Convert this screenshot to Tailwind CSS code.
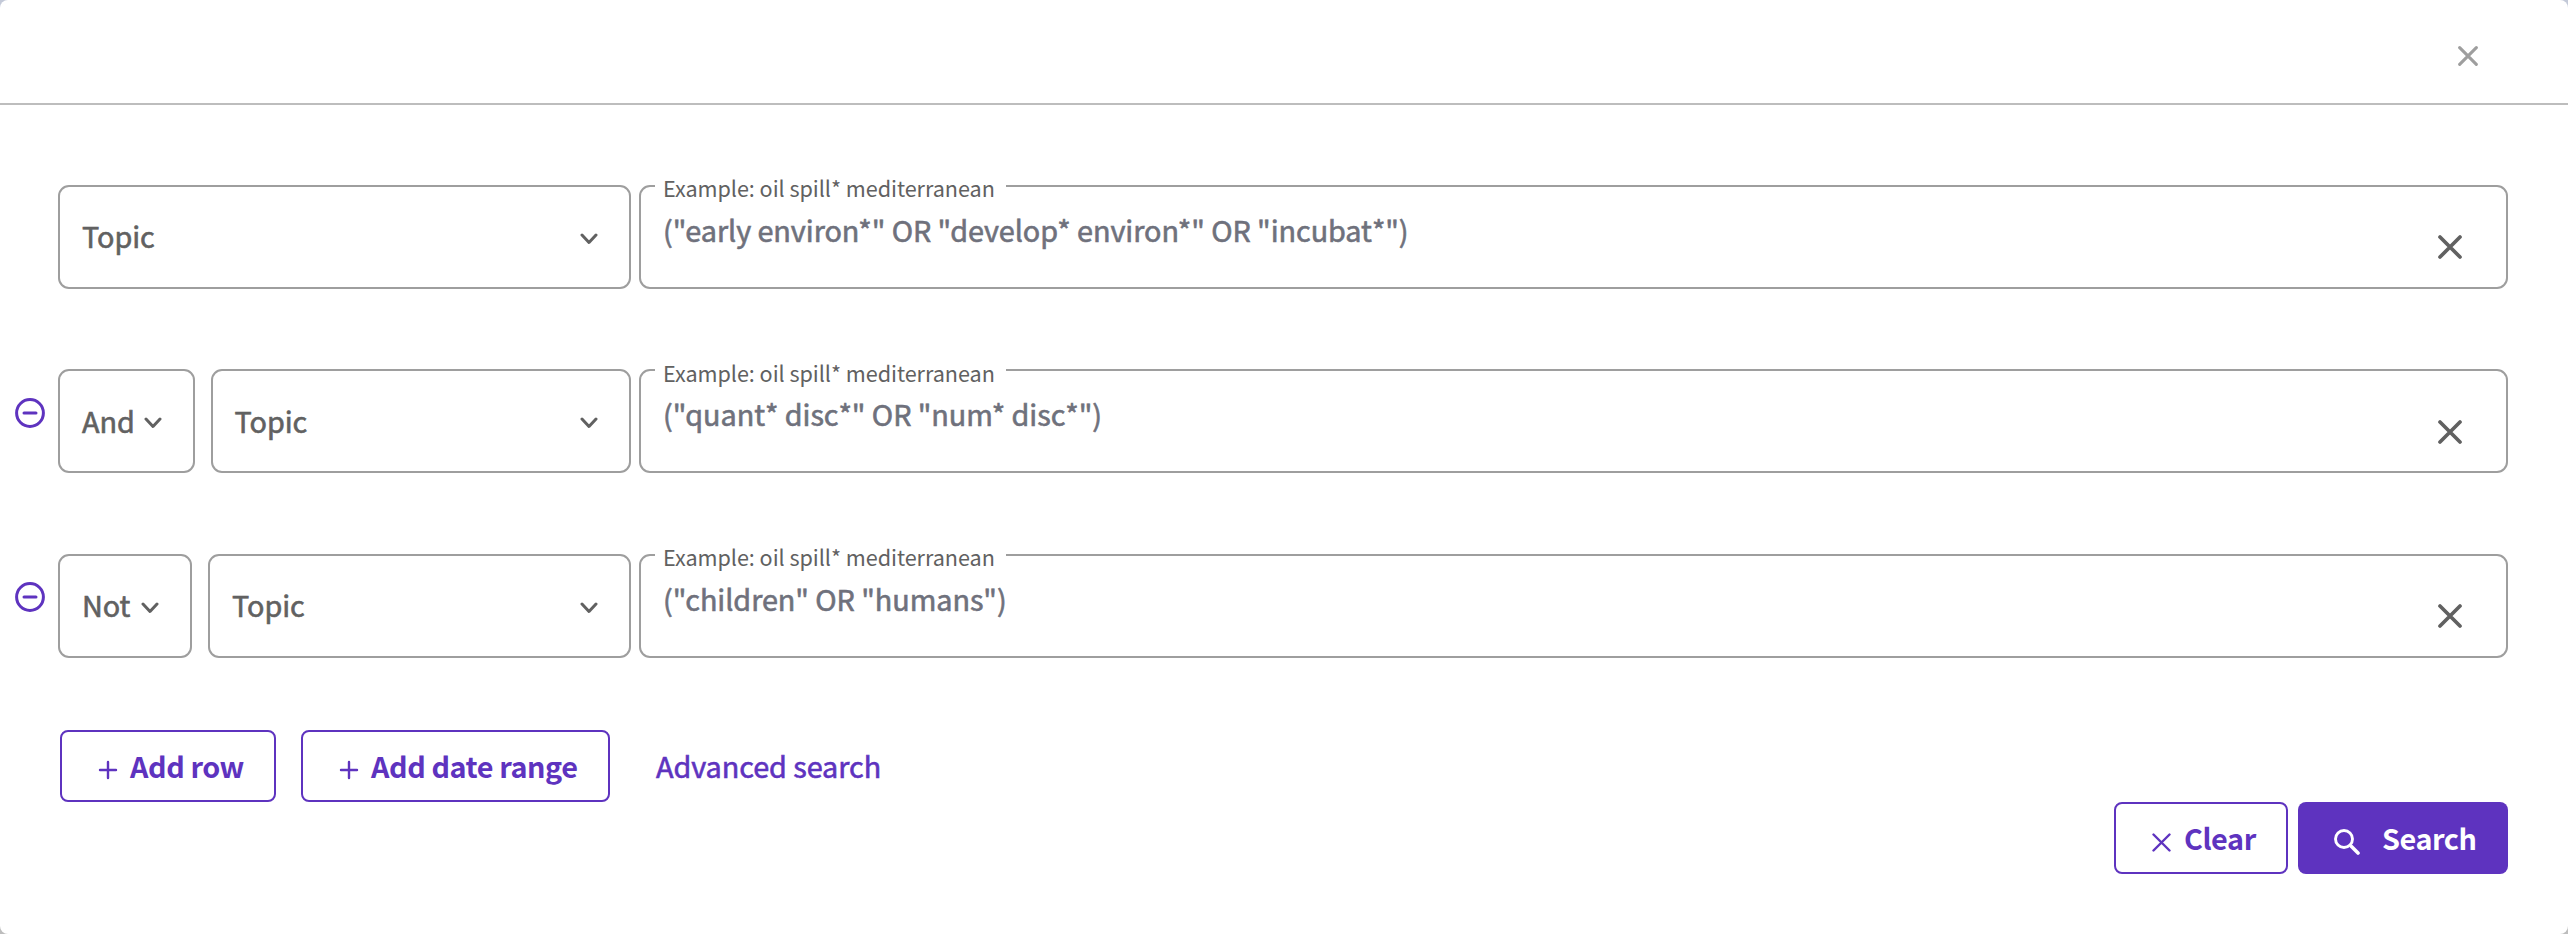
<!DOCTYPE html>
<html lang="en">
<head>
<meta charset="utf-8">
<title>Search</title>
<script src="https://cdn.jsdelivr.net/npm/@tailwindcss/browser@4"></script>
</head>
<body class="h-[934px] w-[2568px] overflow-hidden bg-linear-to-b from-[#c3c9d8] to-[#bdbdbd] font-['Noto_Sans_CJK_SC',sans-serif] text-[28.8px] leading-[40px] tracking-[-0.06px] text-[#616161]">
<svg class="hidden">
  <symbol id="chev" viewBox="0 0 18 12"><path d="M2 2l7 7.5L16 2" fill="none" stroke="currentColor" stroke-width="3" stroke-linecap="round" stroke-linejoin="round"/></symbol>
  <symbol id="x" viewBox="0 0 24 24"><path d="M2 2l20 20M22 2L2 22" fill="none" stroke="currentColor" stroke-width="3.7" stroke-linecap="round"/></symbol>
  <symbol id="minus" viewBox="0 0 30 30"><g fill="none" stroke="currentColor" stroke-width="3" stroke-linecap="round"><circle cx="15" cy="15" r="13.4"/><path d="M9 15h12"/></g></symbol>
  <symbol id="plus" viewBox="0 0 20 20"><path d="M10 2v16M2 10h16" fill="none" stroke="currentColor" stroke-width="2.4" stroke-linecap="round"/></symbol>
</svg>
<main class="flex h-full w-full flex-col rounded-[8px] bg-white">
  <header class="flex h-[105px] shrink-0 items-start justify-end border-b-2 border-[#bdbdbd] pt-[46px] pr-[90px] text-[#9e9e9e]">
    <button class="size-5"><svg class="size-5"><use href="#x"/></svg></button>
  </header>

  <form class="flex flex-col pt-[80px] pr-[60px]">
    <div class="flex h-[104px]">
      <div class="w-[58px]"></div>
      <div class="flex w-[573px] items-center justify-between rounded-[11px] border-2 border-[#9e9e9e] pr-[31px] pl-[22px]"><span class="-mt-[2px] [-webkit-text-stroke:0.6px]">Topic</span><svg class="mt-[3px] h-3 w-[18px]"><use href="#chev"/></svg></div>
      <div class="relative ml-2 flex flex-1 items-start justify-between rounded-[11px] border-2 border-[#9e9e9e] pr-[44px] pl-[22px]">
        <label class="absolute -top-[14px] left-[14px] w-[351px] bg-white pl-[8px] text-[21.6px] leading-[30px] tracking-[-0.04px] whitespace-nowrap">Example: oil spill* mediterranean</label>
        <span class="mt-[23px] text-[#6f717c] [-webkit-text-stroke:0.6px]">("early environ*" OR "develop* environ*" OR "incubat*")</span>
        <svg class="mt-[48px] size-6"><use href="#x"/></svg>
      </div>
    </div>

    <div class="mt-[80px] flex h-[104px]">
      <div class="w-[58px] pt-[29px] pl-[15px] text-[#5e33bf]"><svg class="size-[30px]"><use href="#minus"/></svg></div>
      <div class="flex w-[137px] items-center justify-between rounded-[11px] border-2 border-[#9e9e9e] pr-[31px] pl-[22px]"><span class="[-webkit-text-stroke:0.6px]">And</span><svg class="mt-[3px] h-3 w-[18px]"><use href="#chev"/></svg></div>
      <div class="ml-4 flex w-[420px] items-center justify-between rounded-[11px] border-2 border-[#9e9e9e] pr-[31px] pl-[21.5px]"><span class="[-webkit-text-stroke:0.6px]">Topic</span><svg class="mt-[3px] h-3 w-[18px]"><use href="#chev"/></svg></div>
      <div class="relative ml-2 flex flex-1 items-start justify-between rounded-[11px] border-2 border-[#9e9e9e] pr-[44px] pl-[22px]">
        <label class="absolute -top-[13px] left-[14px] w-[351px] bg-white pl-[8px] text-[21.6px] leading-[30px] tracking-[-0.04px] whitespace-nowrap">Example: oil spill* mediterranean</label>
        <span class="mt-[23px] text-[#6f717c] [-webkit-text-stroke:0.6px]">("quant* disc*" OR "num* disc*")</span>
        <svg class="mt-[49px] size-6"><use href="#x"/></svg>
      </div>
    </div>

    <div class="mt-[81px] flex h-[104px]">
      <div class="w-[58px] pt-[28px] pl-[15px] text-[#5e33bf]"><svg class="size-[30px]"><use href="#minus"/></svg></div>
      <div class="flex w-[134px] items-center justify-between rounded-[11px] border-2 border-[#9e9e9e] pr-[31px] pl-[22px]"><span class="-mt-[2px] [-webkit-text-stroke:0.6px]">Not</span><svg class="mt-[3px] h-3 w-[18px]"><use href="#chev"/></svg></div>
      <div class="ml-4 flex w-[423px] items-center justify-between rounded-[11px] border-2 border-[#9e9e9e] pr-[31px] pl-[22px]"><span class="-mt-[2px] [-webkit-text-stroke:0.6px]">Topic</span><svg class="mt-[3px] h-3 w-[18px]"><use href="#chev"/></svg></div>
      <div class="relative ml-2 flex flex-1 items-start justify-between rounded-[11px] border-2 border-[#9e9e9e] pr-[44px] pl-[22px]">
        <label class="absolute -top-[14px] left-[14px] w-[351px] bg-white pl-[8px] text-[21.6px] leading-[30px] tracking-[-0.04px] whitespace-nowrap">Example: oil spill* mediterranean</label>
        <span class="mt-[23px] text-[#6f717c] [-webkit-text-stroke:0.6px]">("children" OR "humans")</span>
        <svg class="mt-[48px] size-6"><use href="#x"/></svg>
      </div>
    </div>

    <div class="mt-[72px] flex h-[72px] items-center pl-[60px] text-[#5e33bf]">
      <button type="button" class="flex h-[72px] w-[216px] items-center rounded-[8px] border-2 border-[#5e33bf] pl-[36px] font-bold tracking-[-0.42px] whitespace-nowrap"><svg class="mt-[7px] mr-[12px] size-5"><use href="#plus"/></svg>Add row</button>
      <button type="button" class="ml-[25px] flex h-[72px] w-[309px] items-center rounded-[8px] border-2 border-[#5e33bf] pl-[36px] font-bold tracking-[-0.42px] whitespace-nowrap"><svg class="mt-[7px] mr-[12px] size-5"><use href="#plus"/></svg>Add date range</button>
      <a class="ml-[46px] [-webkit-text-stroke:0.6px]">Advanced search</a>
    </div>

    <div class="flex h-[72px] justify-end gap-[10px] text-[#5e33bf]">
      <button type="button" class="flex h-[72px] w-[174px] items-center rounded-[8px] border-2 border-[#5e33bf] pl-[36px] font-bold tracking-[-0.42px]"><svg class="mt-[8px] mr-[13px] size-[19px]" viewBox="0 0 19 19"><path d="M1.5 1.5l16 16M17.5 1.5l-16 16" fill="none" stroke="currentColor" stroke-width="2.4" stroke-linecap="round"/></svg>Clear</button>
      <button type="button" class="flex h-[72px] w-[210px] items-center rounded-[8px] bg-[#5e33bf] pl-[36px] font-bold tracking-[-0.42px] text-white"><svg class="mt-[7px] mr-[22px] size-[26px]" viewBox="0 0 26 26"><g fill="none" stroke="currentColor" stroke-width="2.9" stroke-linecap="round"><circle cx="10" cy="10" r="8.5"/><path d="M17.5 17.5l6.5 6.5" stroke-width="3.6"/></g></svg>Search</button>
    </div>
  </form>
</main>
</body>
</html>
